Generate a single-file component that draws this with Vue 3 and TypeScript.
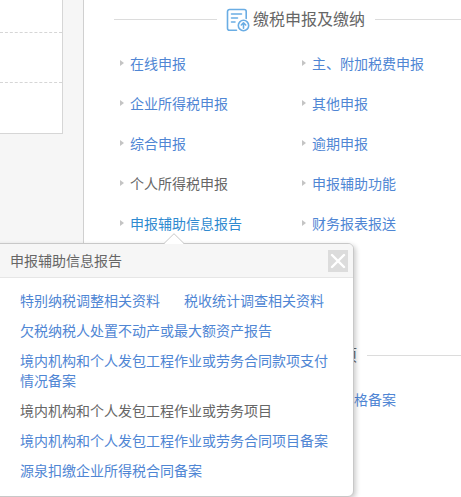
<script setup lang="ts">
import { ref } from 'vue'

interface Item {
  text: string
  state?: 'plain' | 'active'
}

const declareItems: Item[] = [
  { text: '在线申报' },
  { text: '主、附加税费申报' },
  { text: '企业所得税申报' },
  { text: '其他申报' },
  { text: '综合申报' },
  { text: '逾期申报' },
  { text: '个人所得税申报', state: 'plain' },
  { text: '申报辅助功能' },
  { text: '申报辅助信息报告', state: 'active' },
  { text: '财务报表报送' },
]

const recordItems: Item[] = [{ text: '税务资格备案' }]

const reportItems: Item[] = [
  { text: '特别纳税调整相关资料' },
  { text: '税收统计调查相关资料' },
  { text: '欠税纳税人处置不动产或最大额资产报告' },
  { text: '境内机构和个人发包工程作业或劳务合同款项支付情况备案' },
  { text: '境内机构和个人发包工程作业或劳务项目', state: 'plain' },
  { text: '境内机构和个人发包工程作业或劳务合同项目备案' },
  { text: '源泉扣缴企业所得税合同备案' },
]

const open = ref(true)
</script>

<template>
  <div class="page">
    <aside class="side">
      <div class="side-row"></div>
      <div class="side-row"></div>
      <div class="side-row"></div>
    </aside>

    <main class="main">
      <section class="section">
        <h2 class="heading">
          <svg class="icon" viewBox="0 0 24 24" fill="none" stroke="#6aade4" stroke-width="1.6" stroke-linecap="round" stroke-linejoin="round">
            <path d="M20.2 10.5V3.5a2 2 0 0 0-2-2H3.500a2 2 0 0 0-2 2v16.700a2 2 0 0 0 2 2h7" />
            <path d="M5.500 6h10M5.500 10h6M5.500 14h3.500" />
            <circle cx="17.500" cy="17.500" r="5.200" />
            <path d="M17.500 20.300v-5M15.300 17l2.200-2.200 2.200 2.200" />
          </svg>
          <span>缴税申报及缴纳</span>
        </h2>
        <ul class="links">
          <li v-for="item in declareItems" :key="item.text">
            <a href="#" :class="item.state" @click.prevent="open = item.state === 'active'">{{ item.text }}</a>
          </li>
        </ul>
      </section>

      <section class="section">
        <h2 class="heading">
          <svg class="icon" viewBox="0 0 24 24" fill="none" stroke="#6aade4" stroke-width="1.6">
            <rect x="2" y="2" width="19" height="20" rx="2" />
            <path d="M6 7h11M6 12h11M6 17h6" />
          </svg>
          <span>税务备案事项</span>
        </h2>
        <ul class="links">
          <li v-for="item in recordItems" :key="item.text">
            <a href="#" :class="item.state" @click.prevent>{{ item.text }}</a>
          </li>
        </ul>
      </section>
    </main>

    <div v-if="open" class="popup" role="dialog" aria-labelledby="popup-title">
      <svg class="pointer" viewBox="0 0 20 11">
        <path d="M0 11L10 0.700L20 11Z" fill="#fff" />
        <path d="M0 10.500L10 0.700L20 10.500" fill="none" stroke="#c8c8c8" />
      </svg>
      <header class="popup-head">
        <h3 id="popup-title">申报辅助信息报告</h3>
        <button class="close" type="button" aria-label="关闭" @click="open = false">
          <svg viewBox="0 0 20 22" stroke="#fff" stroke-width="2.400" stroke-linecap="round">
            <path d="M4 5l12 12M16 5L4 17" />
          </svg>
        </button>
      </header>
      <ul class="reports">
        <li v-for="item in reportItems" :key="item.text">
          <a href="#" :class="item.state" @click.prevent>{{ item.text }}</a>
        </li>
      </ul>
    </div>
  </div>
</template>

<style>
body {
  background: #f6f6f6;
}
</style>

<style scoped>
.page {
  position: relative;
  display: flex;
  align-items: flex-start;
  gap: 20px;
  min-height: 100vh;
  overflow: hidden;
  font-family: "Noto Sans CJK SC", sans-serif;
  font-size: 14px;
  line-height: 20px;
  color: #666;
}

.side {
  flex: 0 0 62px;
  background: #fff;
  border: solid #d6d6d6;
  border-width: 0 1px 1px 0;
}

.side-row {
  height: 50px;
}

.side-row:first-child {
  height: 32px;
}

.side-row + .side-row {
  border-top: 1px dashed #d6d6d6;
}

.side-row:nth-child(2) {
  height: 49px;
}

.main {
  flex: 1;
  min-width: 364px;
  min-height: 100vh;
  padding: 0 30px;
  background: #fff;
  border-left: 1px solid #d0d0d0;
}

.section {
  min-width: 364px;
  margin-bottom: 92px;
}

.heading {
  display: flex;
  align-items: center;
  height: 38px;
  margin: 0 0 6px;
  font-size: 16px;
  font-weight: 400;
}

.heading::before,
.heading::after {
  content: "";
  flex: 1;
  height: 1px;
  background: #dcdcdc;
}

.heading::before {
  margin-right: 9px;
}

.heading::after {
  margin-left: 10px;
}

.heading span {
  padding-bottom: 2px;
}

.icon {
  width: 24px;
  height: 24px;
  margin-top: 2px;
  margin-right: 3px;
}

ul {
  margin: 0;
  padding: 0;
  list-style: none;
}

a {
  color: #4f86d4;
  text-decoration: none;
}

a.plain {
  color: #666;
}

a.active {
  color: #2f8ad0;
}

.links {
  display: grid;
  grid-template-columns: 1fr 1fr;
}

.links li {
  display: flex;
  align-items: center;
  box-sizing: border-box;
  height: 40px;
  padding: 0 0 2px 6px;
  white-space: nowrap;
}

.links li:only-child {
  grid-column: 2;
}

.links li::before {
  content: "";
  margin-right: 6px;
  border: solid transparent;
  border-width: 3px 0 3px 4px;
  border-left-color: #c4c4c4;
}

.popup {
  position: absolute;
  top: 243px;
  left: -10px;
  box-sizing: border-box;
  width: 364px;
  background: #fff;
  border: 1px solid #c8c8c8;
  border-radius: 6px;
  box-shadow: 2px 2px 5px rgba(0, 0, 0, 0.2);
}

.pointer {
  position: absolute;
  top: -11px;
  left: 173px;
  width: 20px;
  height: 11px;
}

.popup-head {
  display: flex;
  align-items: center;
  justify-content: space-between;
  height: 33px;
  padding: 0 5px 0 19px;
  background: #f6f6f6;
  border-bottom: 1px solid #e6e6e6;
  border-radius: 5px 5px 0 0;
}

.popup-head h3 {
  margin: 0;
  padding-bottom: 2px;
  font-size: 14px;
  font-weight: 400;
}

.close {
  width: 20px;
  height: 22px;
  padding: 0;
  background: #dcdcdc;
  border: 0;
  cursor: pointer;
}

.close svg {
  display: block;
}

.reports {
  display: flex;
  flex-wrap: wrap;
  gap: 10px 24px;
  padding: 12px 20px 16px 29px;
}
</style>
